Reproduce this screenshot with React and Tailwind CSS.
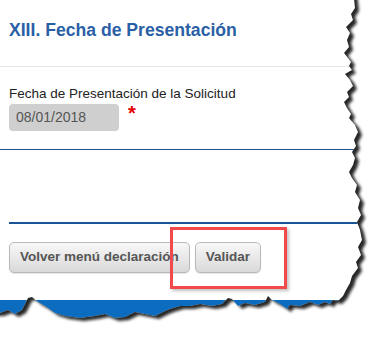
import React from "react";

const edge = [
  [352, -20], [355, 8], [351, 14], [353, 20], [346, 27], [350, 33], [347, 40], [349, 47], [344, 53],
  [348, 58], [351, 62], [349, 66], [352, 70], [345, 74], [350, 80], [353, 86], [347, 92], [349, 97],
  [344, 102], [347, 108], [351, 114], [349, 118], [355, 125], [358, 132], [354, 140], [356, 146],
  [352, 152], [355, 158], [353, 165], [349, 172], [352, 178], [357, 185], [355, 192], [360, 200],
  [358, 208], [361, 215], [357, 222], [360, 230], [362, 240], [358, 247], [361, 255], [356, 262],
  [358, 268], [352, 276], [350, 283], [346, 290], [343, 296], [338, 301], [333, 300], [330, 304],
  [325, 302], [318, 305], [310, 302], [300, 306], [290, 305], [287, 309], [280, 304], [272, 300],
  [268, 296], [265, 302], [255, 305], [245, 303], [238, 306], [232, 299], [228, 298], [222, 304],
  [212, 306], [200, 304], [190, 306], [180, 306], [170, 309], [165, 311], [155, 316], [145, 314],
  [135, 312], [125, 317], [115, 318], [105, 314], [95, 316], [80, 318], [65, 316], [55, 313],
  [45, 306], [38, 302], [32, 297], [28, 298], [22, 310], [15, 314], [8, 310], [0, 313], [-20, 313],
  [-20, -20],
];

const paper = "M" + edge.map((p) => p.join(" ")).join(" L") + " Z";
const outside = "M-40 -40 H430 V380 H-40 Z " + paper;

function TornEdge() {
  return (
    <svg className="absolute inset-0 pointer-events-none" width="390" height="340" viewBox="0 0 390 340">
      <defs>
        <clipPath id="out">
          <path d={outside} clipRule="evenodd" />
        </clipPath>
        <filter id="blur" x="-10%" y="-10%" width="120%" height="120%">
          <feGaussianBlur stdDeviation="1.8" />
        </filter>
      </defs>
      <path d={outside} fill="#fff" fillRule="evenodd" />
      <g clipPath="url(#out)">
        <path d={paper} fill="#000" opacity="0.85" transform="translate(4 3)" filter="url(#blur)" />
      </g>
    </svg>
  );
}

function Btn({ children }) {
  return (
    <button className="h-[31px] px-[10px] rounded-[5px] border border-[#b8b8b8] bg-linear-to-b from-[#f8f8f8] to-[#d9d9d9] text-[13.5px] font-bold text-[#555] shadow-[0_1px_1px_rgba(0,0,0,0.1)]">
      {children}
    </button>
  );
}

export default function App() {
  return (
    <div className="relative w-[390px] h-[340px] overflow-hidden bg-white" style={{ fontFamily: '"Liberation Sans", Arial, sans-serif' }}>
      <div className="w-[370px]">
        <h2 className="pt-[18px] pl-[9px] text-[17.6px] leading-[24px] font-bold text-[#2a5fa6]">
          XIII. Fecha de Presentación
        </h2>
        <div className="mt-[24px] border-t border-[#e6e6e6]" />

        <div className="pl-[9px] pt-[18px]">
          <label className="block text-[13.5px] leading-[18px] text-[#222]">
            Fecha de Presentación de la Solicitud
          </label>
          <div className="mt-[1px] flex items-start gap-[9px]">
            <div className="w-[110px] h-[27px] rounded-[4px] bg-[#cfcfcf] pl-[7px] text-[14px] leading-[27px] text-[#555]">
              08/01/2018
            </div>
            <span className="text-[20px] leading-[18px] font-bold text-[#e60000]">*</span>
          </div>
        </div>

        <div className="mt-[18px] border-t border-[#20508f]" />
        <div className="ml-[9px] mt-[72px] border-t-2 border-[#1a5396]" />

        <div className="pl-[9px] mt-[18px] flex gap-[5px]">
          <Btn>Volver menú declaración</Btn>
          <Btn>Validar</Btn>
        </div>
      </div>

      <div className="mt-[27px] h-[24px] bg-[#0b6cc0]" />

      <div className="absolute left-[170px] top-[227px] w-[117px] h-[62px] border-[3px] border-[#f24a4a] shadow-[2px_2px_3px_rgba(0,0,0,0.25)]" />

      <TornEdge />
    </div>
  );
}
